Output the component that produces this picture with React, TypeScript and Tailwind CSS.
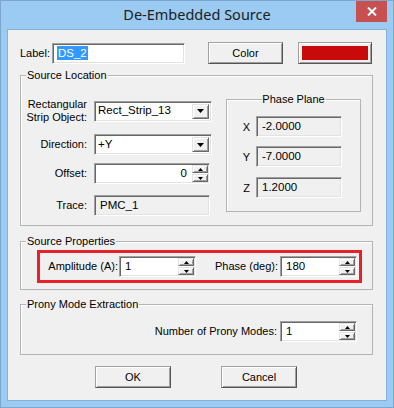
import React from "react";

const sunken =
  "border border-t-[#a0a0a0] border-l-[#a0a0a0] border-r-white border-b-white shadow-[inset_1px_1px_0_#696969,inset_-1px_-1px_0_#e3e3e3]";
const raised =
  "border border-t-[#a0a0a0] border-l-[#a0a0a0] border-r-[#555555] border-b-[#555555] shadow-[inset_1px_1px_0_#ffffff,inset_-1px_-1px_0_#a0a0a0] bg-[#f0f0f0]";
const smallRaised =
  "border border-t-[#e3e3e3] border-l-[#e3e3e3] border-r-[#696969] border-b-[#696969] shadow-[inset_1px_1px_0_#ffffff,inset_-1px_-1px_0_#a0a0a0] bg-[#f0f0f0]";

function Down({ w = 7, h = 4 }: { w?: number; h?: number }) {
  return (
    <svg width={w} height={h} viewBox={`0 0 ${w} ${h}`}>
      <polygon points={`0,0 ${w},0 ${w / 2},${h}`} fill="#000" />
    </svg>
  );
}
function Up({ w = 5, h = 3 }: { w?: number; h?: number }) {
  return (
    <svg width={w} height={h} viewBox={`0 0 ${w} ${h}`}>
      <polygon points={`0,${h} ${w},${h} ${w / 2},0`} fill="#000" />
    </svg>
  );
}

function Combo({ value, w }: { value: string; w: string }) {
  return (
    <div className={`${sunken} ${w} h-[21px] bg-white flex items-center p-[2px]`}>
      <span className="flex-1 pl-[1px] text-[11.5px] leading-none">{value}</span>
      <div className={`${smallRaised} w-[17px] h-full flex items-center justify-center`}>
        <Down />
      </div>
    </div>
  );
}

function Spin({ value, w, right }: { value: string; w: string; right?: boolean }) {
  return (
    <div className={`${sunken} ${w} h-[21px] bg-white flex items-stretch p-[1px]`}>
      <span
        className={`flex-1 flex items-center text-[11.5px] leading-none ${
          right ? "justify-end pr-[5px]" : "pl-[4px]"
        }`}
      >
        {value}
      </span>
      <div className="w-[16px] flex flex-col gap-[1px]">
        <div className={`${smallRaised} flex-1 flex items-center justify-center`}>
          <Up />
        </div>
        <div className={`${smallRaised} flex-1 flex items-center justify-center`}>
          <Down w={5} h={3} />
        </div>
      </div>
    </div>
  );
}

function ReadOnly({ value, w }: { value: string; w: string }) {
  return (
    <div className={`${sunken} ${w} h-[21px] bg-[#f0f0f0] flex items-center pl-[5px] text-[11.5px] leading-none`}>
      {value}
    </div>
  );
}

function Group({
  title,
  className,
  children,
  center,
}: {
  title: string;
  className: string;
  children: React.ReactNode;
  center?: boolean;
}) {
  return (
    <div className={`relative border border-[#b4b4b4] shadow-[inset_1px_1px_0_#ffffff] ${className}`}>
      <span
        className={`absolute top-[-8px] bg-[#f0f0f0] px-[1px] leading-[14px] whitespace-nowrap ${
          center ? "left-1/2 -translate-x-1/2" : "left-[5px]"
        }`}
      >
        {title}
      </span>
      {children}
    </div>
  );
}

export default function App() {
  return (
    <div className="w-[394px] h-[408px] bg-[#9bcbf2] border border-[#7ea6cc] flex flex-col font-['Liberation_Sans',Arial,sans-serif] text-black text-[11px] relative">
      {/* title bar */}
      <div className="h-[28px] flex items-center justify-center">
        <span className="font-['Noto_Sans',sans-serif] text-[14.5px] text-[#202020] leading-none mt-[-2px]">
          De-Embedded Source
        </span>
      </div>
      <div className="absolute top-0 right-[6px] w-[31px] h-[21px] bg-[#c75050] flex items-center justify-center">
        <svg width="10" height="9" viewBox="0 0 10 9">
          <path d="M1 0.5 L9 8.5 M9 0.5 L1 8.5" stroke="#fff" strokeWidth="2" />
        </svg>
      </div>

      {/* content */}
      <div className="mx-[6px] w-[380px] h-[372px] border border-[#86afd6] bg-[#f0f0f0] flex flex-col pl-[12px]">
        {/* label row */}
        <div className="flex items-center mt-[12px] h-[22px]">
          <span className="w-[32px]">Label:</span>
          <div className={`${sunken} w-[133px] h-[21px] bg-white flex items-center pl-[4px]`}>
            <span className="bg-[#3399ff] text-white text-[11.5px] leading-[14px] px-[1px]">DS_2</span>
          </div>
          <div className={`${raised} ml-[23px] w-[75px] h-[22px] flex items-center justify-center`}>Color</div>
          <div className={`${raised} ml-[15px] w-[74px] h-[22px] p-[3px]`}>
            <div className="w-full h-full bg-[#c80a0a]" />
          </div>
        </div>

        {/* Source Location */}
        <Group title="Source Location" className="mt-[11px] w-[353px] h-[151px] flex">
          <div className="flex flex-col">
            <div className="flex items-center mt-[22px]">
              <span className="w-[66px] text-right leading-[13px] whitespace-nowrap flex flex-col items-end">
                <span>Rectangular</span>
                <span>Strip Object:</span>
              </span>
              <div className="ml-[7px]">
                <Combo value="Rect_Strip_13" w="w-[118px]" />
              </div>
            </div>
            <div className="flex items-center mt-[10px]">
              <span className="w-[66px] text-right">Direction:</span>
              <div className="ml-[7px]">
                <Combo value="+Y" w="w-[118px]" />
              </div>
            </div>
            <div className="flex items-center mt-[8px]">
              <span className="w-[66px] text-right">Offset:</span>
              <div className="ml-[7px]">
                <Spin value="0" w="w-[116px]" right />
              </div>
            </div>
            <div className="flex items-center mt-[11px]">
              <span className="w-[66px] text-right">Trace:</span>
              <div className="ml-[7px]">
                <ReadOnly value="PMC_1" w="w-[116px]" />
              </div>
            </div>
          </div>
          <Group title="Phase Plane" center className="ml-[14px] mt-[23px] w-[135px] h-[113px] flex flex-col">
            {[
              ["X", "-2.0000", "mt-[16px]"],
              ["Y", "-7.0000", "mt-[9px]"],
              ["Z", "1.2000", "mt-[10px]"],
            ].map(([l, v, m]) => (
              <div key={l} className={`flex items-center ${m}`}>
                <span className="ml-[15px] w-[9px] text-center mt-[1px]">{l}</span>
                <div className="ml-[5px]">
                  <ReadOnly value={v} w="w-[86px]" />
                </div>
              </div>
            ))}
          </Group>
        </Group>

        {/* Source Properties */}
        <Group title="Source Properties" className="mt-[15px] w-[353px] h-[49px]">
          <div className="ml-[16px] mt-[8px] w-[325px] h-[33px] border-[3px] border-[#e8202a] flex items-center">
            <span className="w-[78px] text-right">Amplitude (A):</span>
            <div className="ml-[1px]">
              <Spin value="1" w="w-[77px]" />
            </div>
            <span className="w-[82px] text-right">Phase (deg):</span>
            <div className="ml-[2px]">
              <Spin value="180" w="w-[77px]" />
            </div>
          </div>
        </Group>

        {/* Prony */}
        <Group title="Prony Mode Extraction" className="mt-[14px] w-[353px] h-[51px]">
          <div className="flex items-center mt-[16px]">
            <span className="w-[256px] text-right">Number of Prony Modes:</span>
            <div className="ml-[3px]">
              <Spin value="1" w="w-[77px]" />
            </div>
          </div>
        </Group>

        {/* buttons */}
        <div className="flex mt-[11px]">
          <div className={`${raised} ml-[75px] w-[76px] h-[22px] flex items-center justify-center`}>OK</div>
          <div className={`${raised} ml-[50px] w-[76px] h-[22px] flex items-center justify-center`}>Cancel</div>
        </div>
      </div>
    </div>
  );
}
